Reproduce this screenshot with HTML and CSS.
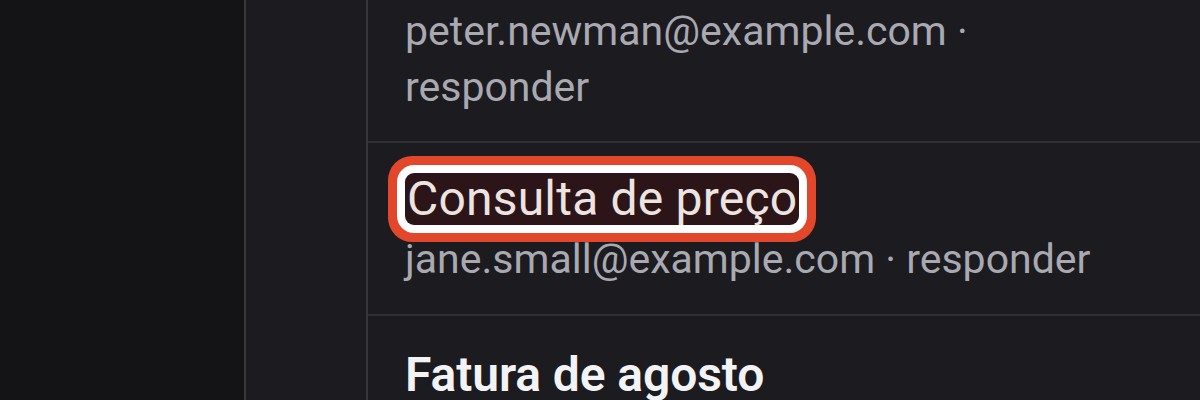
FILE: index.html
```html
<!DOCTYPE html>
<html lang="pt">
<head>
<meta charset="utf-8">
<title>Mensagens</title>
<link rel="stylesheet" href="styles.css">
</head>
<body>
<div class="app">
  <aside class="sidebar"></aside>
  <nav class="rail"></nav>
  <main class="list">
    <div class="row row-first">
      <div class="meta">peter.newman@example.com · responder</div>
    </div>
    <div class="row">
      <div class="title"><span class="hl">Consulta de preço</span></div>
      <div class="meta">jane.small@example.com · responder</div>
    </div>
    <div class="row">
      <div class="title title-unread">Fatura de agosto</div>
    </div>
  </main>
</div>
</body>
</html>
```

FILE: styles.css
```css
* { box-sizing: border-box; }
html, body {
  margin: 0;
  height: 100%;
  background: #1c1b20;
  overflow: hidden;
}
body {
  font-family: "Segoe UI", Roboto, "Liberation Sans", sans-serif;
}
.app {
  display: flex;
  height: 400px;
}
.sidebar {
  width: 246px;
  flex: none;
  background: #141416;
  border-right: 2px solid #36363b;
}
.rail {
  width: 122px;
  flex: none;
  background: #1c1b20;
  border-right: 2px solid #36363b;
}
.list {
  flex: 1;
  background: #1c1b20;
  overflow: hidden;
}
.row {
  padding: 33px 37px 27px;
  border-top: 2px solid #2f2f34;
}
.row-first {
  border-top: 0;
  padding-top: 3px;
  padding-bottom: 26px;
}
.meta {
  max-width: 705px;
  font-size: 41px;
  line-height: 56px;
  color: #a9a9b1;
}
.title {
  display: flex;
  font-size: 48px;
  line-height: 52px;
  color: #f3f3f5;
  margin-bottom: 6px;
}
.hl {
  display: inline-block;
  height: 52px;
  margin-top: -3px;
  padding: 0 2px;
  border-radius: 9px;
  background: #2b1519;
  color: #ede3e0;
  letter-spacing: 0.2px;
  box-shadow: 0 0 0 8px #ffffff, 0 0 0 17px #e2472c;
}
.title-unread {
  font-weight: 600;
  letter-spacing: -0.1px;
}
```
